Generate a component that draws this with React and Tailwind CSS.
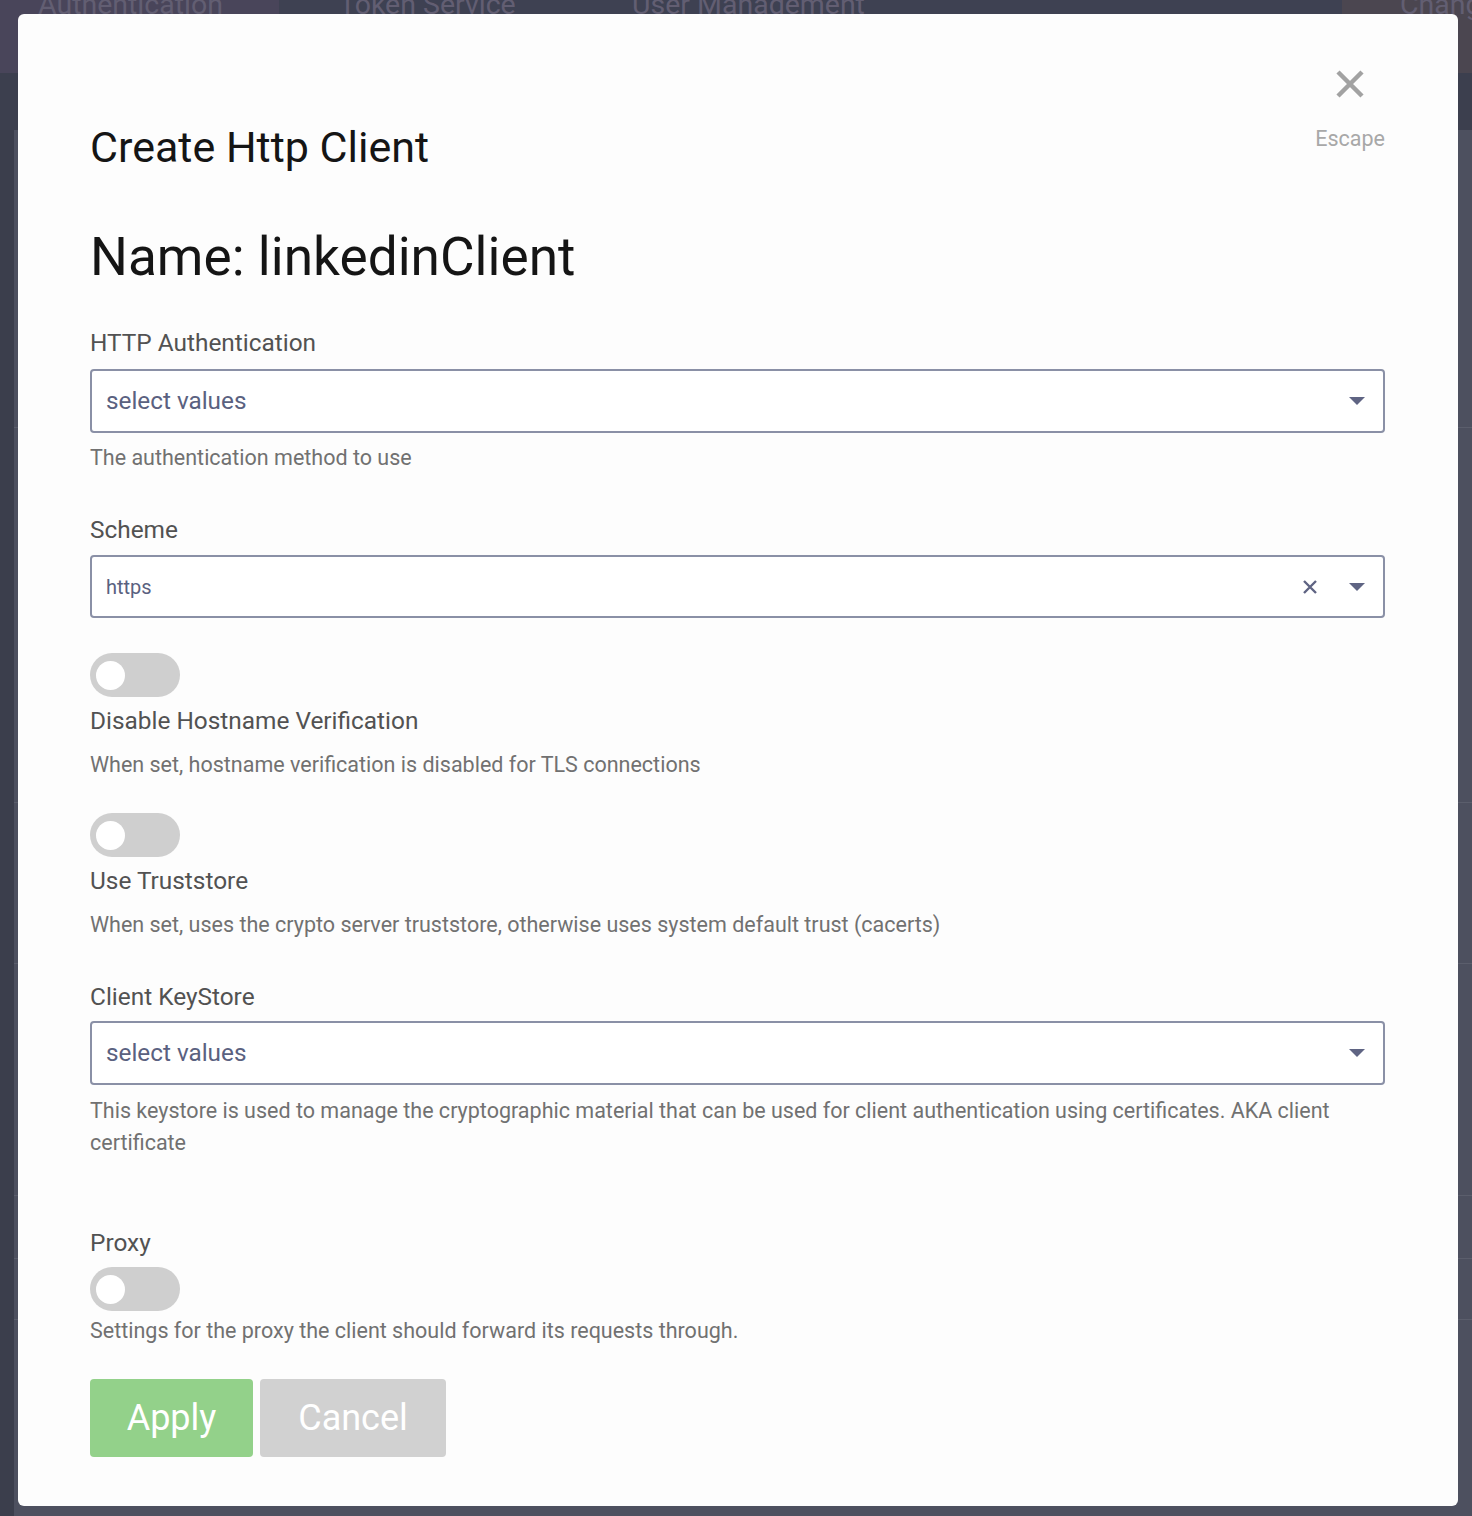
import React from 'react';

const Caret = () => (
  <svg width="16" height="8" viewBox="0 0 16 8" className="shrink-0">
    <path d="M0 0 L16 0 L8 8 Z" fill="#5f6483" />
  </svg>
);

const SelectBox = ({ value, placeholder, clearable, height = 'h-[64px]' }) => (
  <div
    className={`${height} w-full flex items-center border-2 border-[#8a90a6] rounded-[4px] pl-[14px] pr-[18px] bg-white`}
  >
    {value ? (
      <span className="flex-1 text-[20px] text-[#5a6180]">{value}</span>
    ) : (
      <span className="flex-1 text-[24.3px] text-[#5a6180]">{placeholder}</span>
    )}
    {clearable && (
      <svg width="16" height="16" viewBox="0 0 16 16" className="mr-[31px]">
        <path d="M2 2 L14 14 M14 2 L2 14" stroke="#5f6483" strokeWidth="2.4" />
      </svg>
    )}
    <Caret />
  </div>
);

const Toggle = () => (
  <div className="w-[90px] h-[44px] rounded-full bg-[#cfcfcf] flex items-center pl-[6px]">
    <div className="w-[29px] h-[29px] rounded-full bg-white" />
  </div>
);

const Label = ({ children, className = '' }) => (
  <div className={`text-[24.4px] leading-[32px] text-[#525252] ${className}`}>{children}</div>
);

const Help = ({ children, className = '' }) => (
  <div className={`text-[21.5px] leading-[32px] text-[#717171] ${className}`}>{children}</div>
);

const tabs = [
  { name: 'Authentication', w: 'w-[279px]', bg: 'bg-[#49455a]', pl: 'pl-[38px]' },
  { name: 'Token Service', w: 'w-[293px]', bg: 'bg-[#3e4152]', pl: 'pl-[60px]' },
  { name: 'User Management', w: 'w-[770px]', bg: 'bg-[#3e4152]', pl: 'pl-[60px]' },
  { name: 'Change', w: 'flex-1', bg: 'bg-[#4b4650]', pl: 'pl-[58px]' },
];

export default function App() {
  return (
    <div className="relative w-[1472px] h-[1516px] overflow-hidden bg-[#3b3e4c] font-['Roboto',sans-serif]">
      {/* page behind the dialog */}
      <div className="flex h-[73px]">
        {tabs.map((t) => (
          <div key={t.name} className={`${t.w} ${t.bg} ${t.pl} overflow-hidden`}>
            <div className="text-[28.5px] leading-[28px] -mt-[9px] text-[#625e72] whitespace-nowrap">{t.name}</div>
          </div>
        ))}
      </div>
      <div className="h-[57px] bg-[#3c3f4e]" />
      <div className="pl-[14px]">
        <div className="bg-[#4d505f] flex flex-col">
          <div className="h-[298px] border-b border-[#5b5e6c]" />
          <div className="h-[375px] border-b border-[#5b5e6c]" />
          <div className="h-[161px] border-b border-[#5b5e6c]" />
          <div className="h-[232px] border-b border-[#5b5e6c]" />
          <div className="h-[63px] border-b border-[#5b5e6c]" />
          <div className="h-[61px] border-b border-[#5b5e6c]" />
          <div className="h-[200px]" />
        </div>
      </div>

      {/* dialog */}
      <div className="absolute left-[18px] top-[14px] w-[1440px] h-[1492px] bg-[#fdfdfd] rounded-[6px] pl-[72px] pr-[73px] pt-[56px] pb-[50px] flex flex-col">
        <div className="flex justify-between items-start">
          <h1 className="mt-[52px] text-[43px] leading-[50px] text-[#151515]">Create Http Client</h1>
          <div className="flex flex-col items-center">
            <svg width="28" height="28" viewBox="0 0 28 28">
              <path d="M2 2 L26 26 M26 2 L2 26" stroke="#a2a2a2" strokeWidth="4.5" />
            </svg>
            <div className="mt-[29px] text-[21.5px] leading-[24px] text-[#a8a8a8]">Escape</div>
          </div>
        </div>

        <h2 className="mt-[53px] text-[53.2px] leading-[64px] text-[#151515]">Name: linkedinClient</h2>

        <Label className="mt-[38px]">HTTP Authentication</Label>
        <div className="mt-[10px]">
          <SelectBox placeholder="select values" />
        </div>
        <Help className="mt-[9px]">The authentication method to use</Help>

        <Label className="mt-[40px]">Scheme</Label>
        <div className="mt-[9px]">
          <SelectBox value="https" clearable height="h-[63px]" />
        </div>

        <div className="mt-[35px]">
          <Toggle />
        </div>
        <Label className="mt-[8px]">Disable Hostname Verification</Label>
        <Help className="mt-[12px]">When set, hostname verification is disabled for TLS connections</Help>

        <div className="mt-[32px]">
          <Toggle />
        </div>
        <Label className="mt-[8px]">Use Truststore</Label>
        <Help className="mt-[12px]">
          When set, uses the crypto server truststore, otherwise uses system default trust (cacerts)
        </Help>

        <Label className="mt-[40px]">Client KeyStore</Label>
        <div className="mt-[8px]">
          <SelectBox placeholder="select values" />
        </div>
        <Help className="mt-[10px]">
          This keystore is used to manage the cryptographic material that can be used for client authentication using
          certificates. AKA client certificate
        </Help>

        <Label className="mt-[68px]">Proxy</Label>
        <div className="mt-[8px]">
          <Toggle />
        </div>
        <Help className="mt-[4px]">Settings for the proxy the client should forward its requests through.</Help>

        <div className="mt-[32px] flex gap-[7px]">
          <button className="w-[163px] h-[78px] rounded-[4px] bg-[#93d18a] text-white text-[36px]">Apply</button>
          <button className="w-[186px] h-[78px] rounded-[4px] bg-[#d1d1d1] text-white text-[36px]">Cancel</button>
        </div>
      </div>
    </div>
  );
}
